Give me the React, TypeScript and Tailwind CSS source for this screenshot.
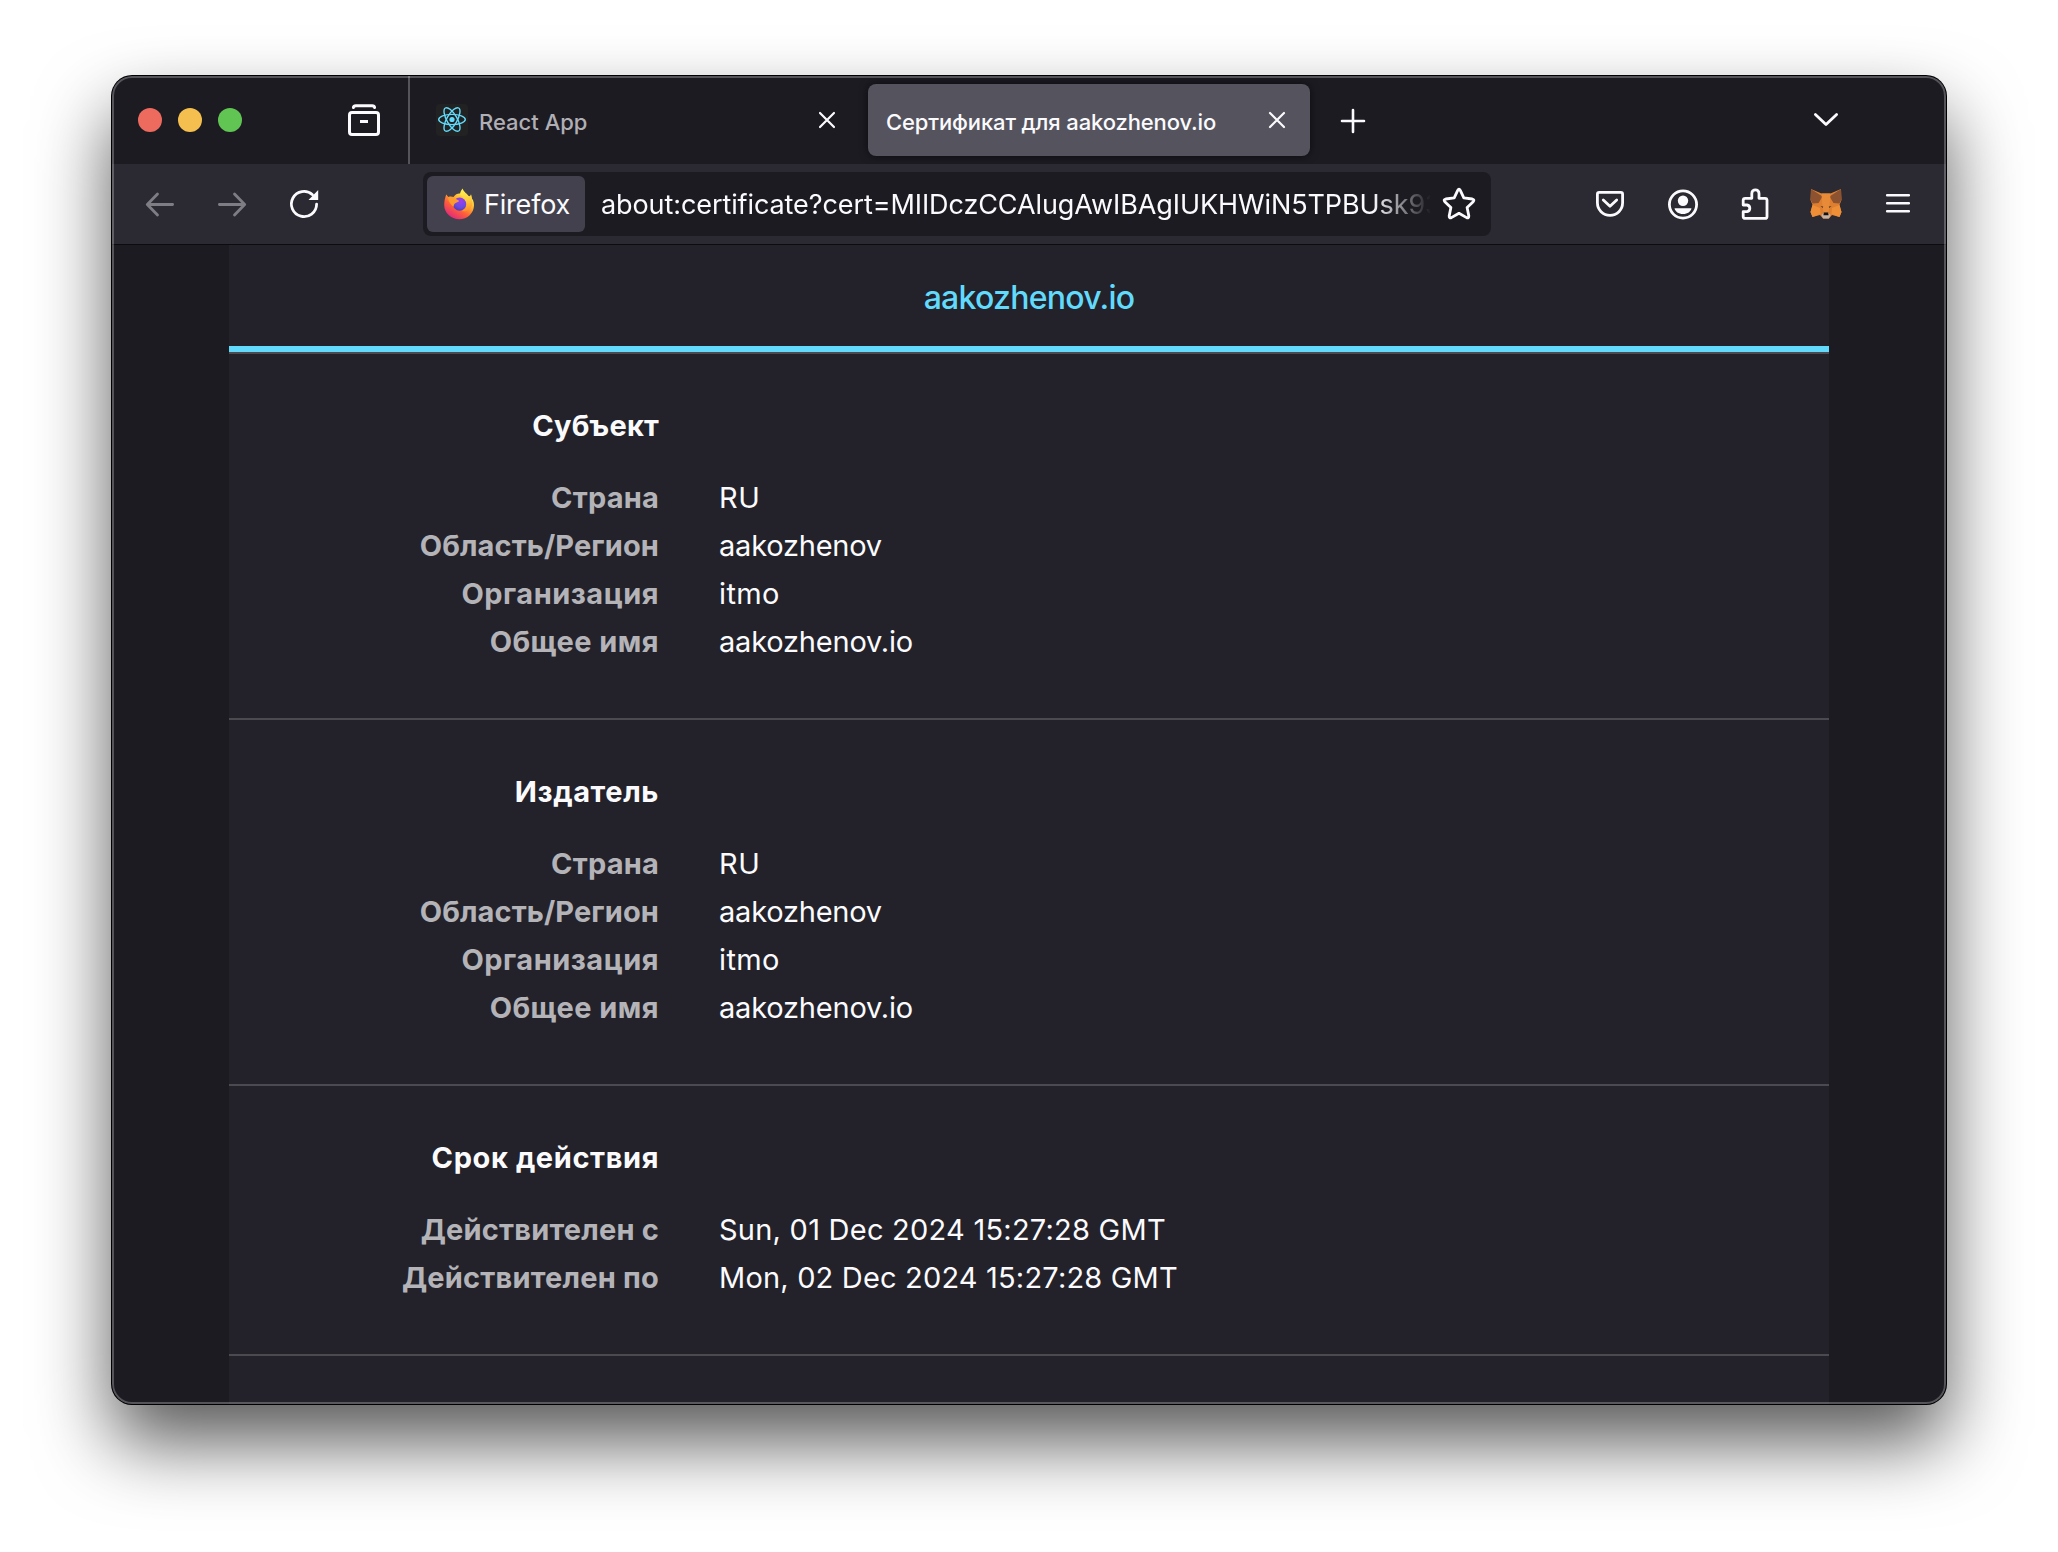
import React from 'react';

type Row = { label: string; value: string; labelTracking: string; tracking: string };

const subject: Row[] = [
  { label: 'Страна', value: 'RU', labelTracking: 'tracking-[0.2px]', tracking: 'tracking-[0.5px]' },
  { label: 'Область/Регион', value: 'aakozhenov', labelTracking: 'tracking-[0.1px]', tracking: 'tracking-[-0.22px]' },
  { label: 'Организация', value: 'itmo', labelTracking: 'tracking-[0.5px]', tracking: 'tracking-[0.4px]' },
  { label: 'Общее имя', value: 'aakozhenov.io', labelTracking: 'tracking-[0.45px]', tracking: 'tracking-[-0.2px]' },
];

const sections: { title: string; tracking: string; rows: Row[] }[] = [
  { title: 'Субъект', tracking: 'tracking-[0.2px]', rows: subject },
  { title: 'Издатель', tracking: 'tracking-[0.6px]', rows: subject },
  {
    title: 'Срок действия',
    tracking: 'tracking-[0.6px]',
    rows: [
      {
        label: 'Действителен с',
        value: 'Sun, 01 Dec 2024 15:27:28 GMT',
        labelTracking: 'tracking-[0.2px]',
        tracking: 'tracking-[0.24px]',
      },
      {
        label: 'Действителен по',
        value: 'Mon, 02 Dec 2024 15:27:28 GMT',
        labelTracking: 'tracking-[0.2px]',
        tracking: 'tracking-[0.18px]',
      },
    ],
  },
];

const stroke = {
  fill: 'none',
  stroke: 'currentColor',
  strokeWidth: 2.8,
  strokeLinecap: 'round' as const,
  strokeLinejoin: 'round' as const,
};

function ViewIcon() {
  return (
    <svg className="size-8 shrink-0" viewBox="0 0 32 32" {...stroke} strokeWidth={3}>
      <path d="M5.400 3.400C5.600 2.100 6.600 1.700 7.800 1.700H24.200C25.400 1.700 26.400 2.100 26.600 3.400" />
      <rect x="1.500" y="8.500" width="29" height="22" rx="2.500" />
      <path d="M12 17.500h8" strokeLinecap="butt" />
    </svg>
  );
}

function ReactIcon() {
  return (
    <svg className="size-8 shrink-0 rounded-[4px] bg-[#222222]" viewBox="0 0 32 32" fill="none" stroke="#61dafb" strokeWidth="1.400">
      <ellipse cx="16" cy="15.500" rx="13.300" ry="5.100" />
      <ellipse cx="16" cy="15.500" rx="13.300" ry="5.100" transform="rotate(60 16 15.500)" />
      <ellipse cx="16" cy="15.500" rx="13.300" ry="5.100" transform="rotate(120 16 15.500)" />
      <circle cx="16" cy="15.500" r="2.600" fill="#61dafb" stroke="none" />
    </svg>
  );
}

function CloseIcon() {
  return (
    <svg className="size-5 shrink-0" viewBox="0 0 20 20" {...stroke} strokeWidth={2.2}>
      <path d="M3 3l14 14M17 3L3 17" />
    </svg>
  );
}

function FirefoxIcon() {
  return (
    <svg className="size-8 shrink-0" viewBox="0 0 32 32">
      <defs>
        <linearGradient id="ffBody" x1="0.850" y1="0.100" x2="0.200" y2="0.950">
          <stop offset="0" stopColor="#fff44f" />
          <stop offset="0.300" stopColor="#ffb02e" />
          <stop offset="0.600" stopColor="#ff5f3a" />
          <stop offset="1" stopColor="#e02580" />
        </linearGradient>
        <radialGradient id="ffGlobe" cx="0.600" cy="0.250" r="0.800">
          <stop offset="0" stopColor="#a13bf0" />
          <stop offset="0.600" stopColor="#6a4be0" />
          <stop offset="1" stopColor="#4b3bb0" />
        </radialGradient>
        <linearGradient id="ffTail" x1="0.500" y1="0" x2="0.600" y2="1">
          <stop offset="0" stopColor="#fff44f" />
          <stop offset="0.500" stopColor="#ffcf3f" />
          <stop offset="1" stopColor="#ff8a2b" />
        </linearGradient>
      </defs>
      <path d="M3.200 6.500C4 7 4.600 8.200 5.200 9 7 8.200 9 8.400 10.500 9 12.500 5.500 16 5 17.500 5.600L27 8.500C30 11 31 14 31 17.200 31 25 24.500 31.200 16.200 31.200 8 31.200 1.200 25 1.200 17 1.200 13.500 1.900 10 3.200 6.500Z" fill="url(#ffBody)" />
      <circle cx="16.600" cy="16.200" r="6.600" fill="url(#ffGlobe)" />
      <path d="M19.700.4C17.500 3 16.800 5 17.200 6.800 19.500 8.500 23.500 10.500 23.700 15.500 23.900 19.500 21.300 22.300 18.300 23 24 24.500 29 20.500 29.300 15.500 29.500 11.500 28.800 8.500 28 6.200 27.500 7.400 27 8.200 26.200 8.800 24.500 5.500 20.800 4.500 19.700.4Z" fill="url(#ffTail)" />
      <path d="M5.200 9C8 8.200 9.800 9.200 10.800 10.500 12.500 10.900 14.500 11.400 16.300 13 15 14.400 13.500 14.500 12.200 15.200 11 16 10.600 18 10.600 18.800 8 17 5 13 5.200 9Z" fill="#ff9a2e" />
    </svg>
  );
}

function FoxIcon() {
  return (
    <svg className="size-8 shrink-0" viewBox="0 0 32 32">
      <path d="M1 1L11.500 5.500H20.500L31 1L31.500 12L29.500 17L31.500 24L29.500 29L22 27L19 30.500H13L10 27L2.500 29L.5 24L2.500 17L.5 12Z" fill="#dd7f2f" />
      <path d="M1 1L12.500 8.500L8.500 15L2.500 15.500L.8 12ZM31 1L19.500 8.500L23.500 15L29.500 15.500L31.200 12Z" fill="#8d5230" />
      <path d="M11.500 5.500H20.500L19.500 19L18.500 24H13.500L12.500 19Z" fill="#e88b38" />
      <path d="M2.500 17L10 20L10.500 26L2.500 29L.5 24ZM29.500 17L22 20L21.500 26L29.500 29L31.500 24Z" fill="#ee8f38" />
      <path d="M10.500 18L13.200 18.600L12.800 19.900ZM21.500 18L18.800 18.600L19.200 19.900Z" fill="#4a3a34" />
      <path d="M11.500 27L13.500 25H18.500L20.500 27L18.800 30.500H13.200Z" fill="#c5b3a6" />
      <path d="M13.900 24.500H18.100L18.600 27.300H13.400Z" fill="#16120f" />
    </svg>
  );
}

function TabBar() {
  return (
    <div className="flex h-[88px] shrink-0 bg-[#1c1b22]">
      <div className="flex w-[298px] shrink-0 items-center justify-between border-r-2 border-[#55545a] pr-7 pl-[26px]">
        <div className="flex gap-4">
          <span className="size-6 rounded-full bg-[#ed6a5e]" />
          <span className="size-6 rounded-full bg-[#f5bf4f]" />
          <span className="size-6 rounded-full bg-[#61c554]" />
        </div>
        <ViewIcon />
      </div>
      <div className="flex w-[458px] shrink-0 items-center pr-[31px] pl-[26px]">
        <ReactIcon />
        <span className="ml-[11px] grow pt-1 text-[22px] font-medium text-[#b0afb4]">React App</span>
        <CloseIcon />
      </div>
      <div className="mt-2 flex h-[72px] w-[442px] shrink-0 items-center rounded-lg bg-[#55535e] pr-[23px] pl-[18px] shadow-[0_0_8px_rgba(0,0,0,0.6)]">
        <span className="grow pt-1 text-[22px] font-medium tracking-[-0.13px] whitespace-nowrap text-[#fbfbfe]">
          Сертификат для aakozhenov.io
        </span>
        <CloseIcon />
      </div>
      <svg className="mt-8 ml-[30px] size-[26px] shrink-0" viewBox="0 0 26 26" {...stroke} strokeWidth={2.6}>
        <path d="M13 2v22M2 13h22" />
      </svg>
      <svg className="mt-[34px] mr-[107px] ml-auto h-[18px] w-[26px] shrink-0" viewBox="0 0 26 18" {...stroke}>
        <path d="M2.400 4.400L13 14.600L23.600 4.400" />
      </svg>
    </div>
  );
}

function Toolbar() {
  return (
    <div className="flex h-[81px] shrink-0 items-center border-b border-[#0c0c0e] bg-[#2b2a33] text-[#fbfbfe]">
      <svg className="ml-8 size-8 shrink-0 text-[#7e7d84]" viewBox="0 0 32 32" {...stroke}>
        <path d="M28.600 16.500H3.500M13.500 6L3.300 16.500L13.500 27" />
      </svg>
      <svg className="ml-10 size-8 shrink-0 text-[#7e7d84]" viewBox="0 0 32 32" {...stroke}>
        <path d="M3.400 16.500H28.500M18.500 6L28.700 16.500L18.500 27" />
      </svg>
      <svg className="ml-10 size-8 shrink-0" viewBox="0 0 32 32" {...stroke}>
        <path d="M28.600 16.200A12.600 12.600 0 1 1 24.500 6.700" />
        <path d="M30.200 2V11.900H20.500Z" fill="currentColor" stroke="none" />
      </svg>
      <div className="ml-[103px] flex h-16 w-[1068px] shrink-0 items-center rounded-lg bg-[#1c1b22] px-1">
        <div className="flex h-14 w-[158px] shrink-0 items-center gap-[9px] rounded-md bg-[#42414d] pl-4">
          <FirefoxIcon />
          <span className="pt-0.5 text-[27px] tracking-[-0.2px]">Firefox</span>
        </div>
        <div className="ml-4 w-[830px] overflow-hidden mask-r-from-[93%] pt-0.5 text-[27px] tracking-[-0.09px] whitespace-nowrap">
          about:certificate?cert=MIIDczCCAlugAwIBAgIUKHWiN5TPBUsk93
        </div>
        <svg className="ml-[11px] size-[34px] shrink-0" viewBox="0 0 34 34" {...stroke}>
          <path d="M15.700 3.300Q17 .8 18.300 3.300L21.800 10.900L30.300 12Q32.900 12.600 31.200 14.700L25.100 20.500L26.800 28.900Q27 31.500 24.600 30.600L17 26.300L9.400 30.600Q7 31.500 7.200 28.900L8.900 20.500L2.800 14.700Q1.100 12.600 3.700 12L12.200 10.900Z" />
        </svg>
      </div>
      <svg className="ml-[103px] size-8 shrink-0" viewBox="0 0 32 32" {...stroke}>
        <path d="M5.200 4.400H26.800Q28.600 4.400 28.600 6.200V14.800A12.600 12.600 0 0 1 3.400 14.800V6.200Q3.400 4.400 5.200 4.400Z" />
        <path d="M9.300 12L16 18.300L22.700 12" />
      </svg>
      <svg className="ml-[41px] size-8 shrink-0" viewBox="0 0 32 32" {...stroke}>
        <circle cx="16" cy="16.500" r="13.600" />
        <circle cx="16" cy="12.700" r="5.200" fill="currentColor" stroke="none" />
        <path d="M7.500 20.200H24.500C23.800 23.500 20.500 26 16 26S8.200 23.500 7.500 20.200Z" fill="currentColor" stroke="none" />
      </svg>
      <svg className="ml-10 size-8 shrink-0" viewBox="0 0 32 32" {...stroke}>
        <path d="M4.200 17V12.300Q4.200 10.300 6.200 10.300H12.800V5.400A3.600 3.600 0 0 1 20 5.400V10.300H26Q28 10.300 28 12.300V28.400Q28 30.400 26 30.400H6.200Q4.200 30.400 4.200 28.400V23.700H8A3.400 3.400 0 0 0 8 17Z" />
      </svg>
      <div className="ml-[39px]">
        <FoxIcon />
      </div>
      <svg className="ml-10 size-8 shrink-0" viewBox="0 0 32 32" {...stroke} strokeWidth={2.6}>
        <path d="M5.200 7.300H26.800M5.200 15.300H26.800M5.200 23.300H26.800" />
      </svg>
    </div>
  );
}

export default function App() {
  return (
    <div className="h-[1552px] w-[2058px] overflow-hidden bg-white pt-[76px] pl-28 font-['Inter',sans-serif]">
      <div className="relative flex h-[1328px] w-[1834px] flex-col overflow-hidden rounded-[20px] bg-[#1c1b22] text-[#fbfbfe] shadow-[0_0_0_1px_#000,0_38px_74px_rgba(0,0,0,0.66)]">
        <TabBar />
        <Toolbar />
        <main className="ml-[117px] w-[1600px] grow bg-[#23222b]">
          <div className="h-[109px] border-b-2 border-[#4b4a50]">
            <div className="flex h-full items-center justify-center border-b-[6px] border-[#61dafb] pt-1 text-[32px] font-medium tracking-[-0.75px] text-[#61dafb]">
              aakozhenov.io
            </div>
          </div>
          {sections.map((s) => (
            <section key={s.title} className="border-b-2 border-[#4b4a50] pt-12 pb-[52px] text-[29px] leading-[48px]">
              <h2 className={`mb-6 w-[430px] text-right font-bold ${s.tracking}`}>{s.title}</h2>
              {s.rows.map((r) => (
                <div key={r.label} className="flex gap-[60px]">
                  <span className={`w-[430px] text-right font-bold text-[#b4b3b8] ${r.labelTracking}`}>{r.label}</span>
                  <span className={r.tracking}>{r.value}</span>
                </div>
              ))}
            </section>
          ))}
        </main>
        <div className="pointer-events-none absolute inset-0 rounded-[20px] border-2 border-white/25" />
      </div>
    </div>
  );
}
